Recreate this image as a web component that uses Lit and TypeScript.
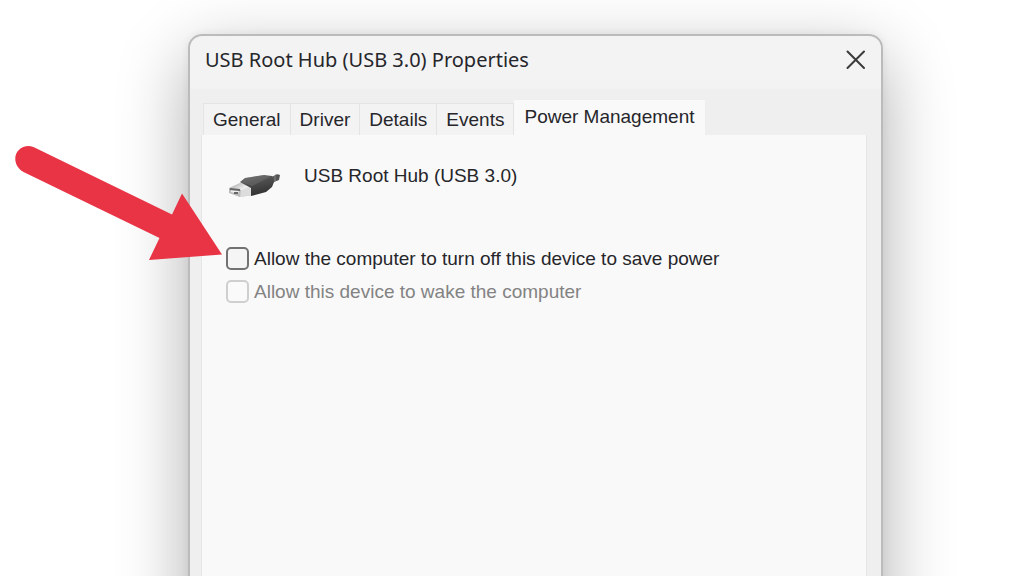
import { LitElement, html, css } from "lit";
import { customElement, state } from "lit/decorators.js";
import { classMap } from "lit/directives/class-map.js";

const TABS = ["General", "Driver", "Details", "Events", "Power Management"];

@customElement("app-root")
export class AppRoot extends LitElement {
  @state() private active = "Power Management";

  static styles = css`
    :host {
      display: block;
      font-family: "Liberation Sans", Arial, sans-serif;
      color: #26262b;
    }
    .stage {
      position: relative;
      box-sizing: border-box;
      display: flex;
      height: 100vh;
      padding: 34px 141px 0 188px;
      overflow: hidden;
      background: #fff;
    }
    .dialog {
      flex: 1;
      display: flex;
      flex-direction: column;
      box-sizing: border-box;
      height: 120vh;
      padding: 0 14px 14px 11px;
      border: 2px solid #bbb;
      border-radius: 14px;
      background: linear-gradient(#f3f3f3 52px, #efefef 54px);
      box-shadow: 0 22px 70px rgba(0, 0, 0, 0.32), 0 0 8px rgba(0, 0, 0, 0.06);
    }
    .titlebar {
      display: flex;
      align-items: center;
      justify-content: space-between;
      height: 48px;
      padding-left: 4px;
    }
    .title {
      margin: 0;
      font: 400 20px/28px "Noto Sans", "Open Sans", sans-serif;
    }
    .close {
      display: flex;
      padding: 0;
      border: 0;
      background: none;
      color: #3a3a3a;
    }
    .tabs {
      display: flex;
      align-items: flex-end;
      margin-top: 15px;
      padding-left: 2px;
    }
    .tab {
      box-sizing: border-box;
      height: 32px;
      padding: 0 9px;
      border: 1px solid #e4e4e4;
      border-width: 1px 1px 0 0;
      background: #f3f3f3;
      color: inherit;
      font: 400 19px/32px "Liberation Sans", Arial, sans-serif;
      white-space: nowrap;
    }
    .tab:first-child {
      border-left-width: 1px;
    }
    .selected {
      height: 36px;
      padding: 0 10px 2px;
      border-color: #eee;
      background: #f9f9f9;
    }
    .panel {
      flex: 1;
      padding: 26px 24px;
      border: 1px solid #e6e6e6;
      border-top: 0;
      background: #f9f9f9;
    }
    .device {
      display: flex;
      gap: 24px;
      height: 81px;
    }
    .usb {
      margin-top: 7px;
      flex: none;
    }
    .name {
      margin: 0;
      font: 400 19px/30px "Liberation Sans", Arial, sans-serif;
    }
    .option {
      display: flex;
      align-items: center;
      gap: 5px;
      height: 33px;
      font: 400 19px/30px "Liberation Sans", Arial, sans-serif;
      white-space: nowrap;
    }
    .box {
      appearance: none;
      box-sizing: border-box;
      flex: none;
      width: 23px;
      height: 23px;
      margin: 0;
      border: 2px solid #727272;
      border-radius: 5px;
      background: #f5f5f5;
    }
    .box:checked {
      background: #0067c0;
    }
    .box:disabled {
      border-color: #cfcfcf;
      background: #fafafa;
    }
    .muted {
      color: #838383;
    }
    .arrow {
      position: absolute;
      left: 0;
      top: 130px;
      pointer-events: none;
    }
  `;

  render() {
    return html`
      <main class="stage">
        <section class="dialog" role="dialog" aria-labelledby="title">
          <header class="titlebar">
            <h1 class="title" id="title">USB Root Hub (USB 3.0) Properties</h1>
            <button class="close" aria-label="Close">
              <svg width="22" height="22" viewBox="0 0 22 22" fill="none" stroke="currentColor" stroke-width="2" stroke-linecap="round">
                <path d="M2.500 2.500 19 19M19 2.500 2.500 19" />
              </svg>
            </button>
          </header>
          <nav class="tabs" role="tablist">
            ${TABS.map(
              (name) => html`<button
                role="tab"
                class=${classMap({ tab: true, selected: name === this.active })}
                aria-selected=${name === this.active}
                @click=${() => (this.active = name)}
              >${name}</button>`
            )}
          </nav>
          <div class="panel" role="tabpanel">
            <div class="device">
              ${this.usbIcon()}
              <p class="name">USB Root Hub (USB 3.0)</p>
            </div>
            <label class="option">
              <input class="box" type="checkbox" />
              <span>Allow the computer to turn off this device to save power</span>
            </label>
            <label class="option muted">
              <input class="box" type="checkbox" disabled />
              <span>Allow this device to wake the computer</span>
            </label>
          </div>
        </section>
        <svg class="arrow" width="230" height="140" viewBox="0 0 230 140" aria-hidden="true">
          <path
            fill="#e93445"
            d="M34.500 17.500 172 84.500 182 63.500 222 124.500 149 130 159.500 108 23.500 42C10 34 14 16 29 16Q32 16 34.500 17.500Z"
          />
        </svg>
      </main>
    `;
  }

  private usbIcon() {
    return html`<svg class="usb" width="54" height="32" viewBox="0 0 54 32" aria-hidden="true">
      <defs>
        <linearGradient id="metal" x1="0" y1="0" x2="1" y2="1">
          <stop offset="0" stop-color="#999" />
          <stop offset="0.5" stop-color="#eee" />
          <stop offset="1" stop-color="#aaa" />
        </linearGradient>
        <linearGradient id="body" x1="0" y1="0" x2="0.3" y2="1">
          <stop offset="0" stop-color="#777" />
          <stop offset="0.4" stop-color="#505050" />
          <stop offset="1" stop-color="#333" />
        </linearGradient>
      </defs>
      <path fill="#555" d="M43 9 48 8Q50 5 54 7L53 12 48 14 43 18Z" />
      <path stroke="#888" d="M49 7v6" />
      <path fill="url(#metal)" d="M3 20 16 14 28 17 27 27 14 29 3 25Z" />
      <path fill="#ddd" d="M15 22 28 18 27 27 14 29Z" />
      <path fill="#bbb" d="M3 20 15 22 14 29 3 25Z" />
      <path fill="#eee" d="M5 22 13 23 12 26 5 24Z" />
      <path stroke="#666" stroke-width="2" d="M4 21 14 22M8 25 12 25" />
      <path fill="url(#body)" d="M14 14 19 10 38 7 46 8 48 14 46 19 40 24 25 28 25 20Z" />
      <path fill="#777" d="M15 14 20 10 38 7 44 9 26 18Z" opacity="0.4" />
    </svg>`;
  }
}
